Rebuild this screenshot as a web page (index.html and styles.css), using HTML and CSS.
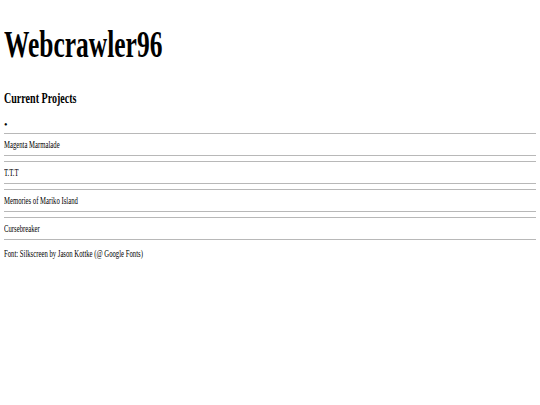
FILE: index.html
```html
<!DOCTYPE html>
<html>
<head>
<meta charset="utf-8">
<title>Webcrawler96</title>
<link rel="stylesheet" href="styles.css">
</head>
<body>
<h1 class="title"><span class="squeeze">Webcrawler96</span></h1>
<h2 class="subtitle"><span class="squeeze">Current Projects</span></h2>
<div class="bullet">•</div>
<div class="projects">
  <div class="project"><span class="squeeze">Magenta Marmalade</span></div>
  <div class="project"><span class="squeeze">T.T.T</span></div>
  <div class="project"><span class="squeeze">Memories of Mariko Island</span></div>
  <div class="project"><span class="squeeze">Cursebreaker</span></div>
</div>
<p class="credit"><span class="squeeze">Font: Silkscreen by Jason Kottke (@ Google Fonts)</span></p>
</body>
</html>
```
FILE: styles.css
```css
html, body {
  margin: 0;
  padding: 0;
  background: #ffffff;
}
body {
  padding: 0 4px;
  font-family: "Liberation Serif", "Times New Roman", serif;
  color: #000000;
}
.squeeze {
  display: inline-block;
  transform: scaleX(0.67);
  transform-origin: left center;
  white-space: nowrap;
}
.title {
  margin: 25px 0 0 0;
  font-size: 38px;
  line-height: 38px;
  font-weight: bold;
}
.subtitle {
  margin: 28px 0 0 0;
  font-size: 15px;
  line-height: 15px;
  font-weight: bold;
}
.bullet {
  margin-top: 13px;
  font-size: 10px;
  line-height: 12px;
}
.projects {
  margin-top: 2px;
  display: flex;
  flex-direction: column;
  gap: 5px;
}
.project {
  border-top: 1px solid #b8b8b8;
  border-bottom: 1px solid #b8b8b8;
  height: 21px;
  font-size: 10px;
  line-height: 21px;
}
.credit {
  margin: 8px 0 0 0;
  font-size: 10px;
  line-height: 12px;
}
```
